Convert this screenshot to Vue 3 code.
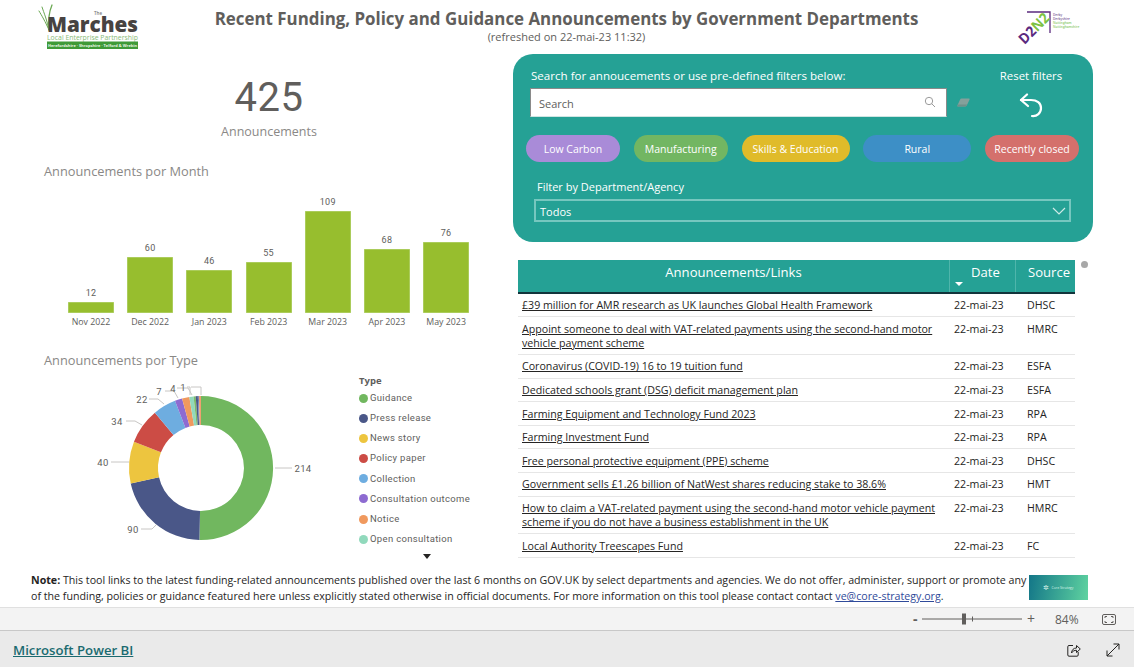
<script setup>
const bars = [
  { m: 'Nov 2022', v: 12 }, { m: 'Dec 2022', v: 60 }, { m: 'Jan 2023', v: 46 }, { m: 'Feb 2023', v: 55 },
  { m: 'Mar 2023', v: 109 }, { m: 'Apr 2023', v: 68 }, { m: 'May 2023', v: 76 },
]
const cx = 141, cy = 93, R = 72, r = 43
const sliceData = [
  [214, '#71B75F'], [90, '#4A5788'], [40, '#EDC53F'], [34, '#CC4C45'], [22, '#6EADE0'], [7, '#8D6BD1'],
  [7, '#F0995E'], [4, '#91D9BC'], [2, '#7EBB6B'], [2, '#4A5788'], [1, '#6B7FB5'], [2, '#F0A070'],
]
const total = sliceData.reduce((s, d) => s + d[0], 0)
let acc = 0
const slices = sliceData.map(([v, c]) => {
  const a0 = (acc / total) * 2 * Math.PI
  acc += v
  const a1 = (acc / total) * 2 * Math.PI
  const p = (rad, a) => `${(cx + rad * Math.sin(a)).toFixed(2)} ${(cy - rad * Math.cos(a)).toFixed(2)}`
  const large = a1 - a0 > Math.PI ? 1 : 0
  return { c, d: `M${p(R, a0)} A${R} ${R} 0 ${large} 1 ${p(R, a1)} L${p(r, a1)} A${r} ${r} 0 ${large} 0 ${p(r, a0)} Z` }
})
const ox = 60, oy = 375
const lab = [
  { t: '214', x: 303, y: 468, l: [[275, 468], [292, 468]] },
  { t: '90', x: 133, y: 529, l: [[141, 529], [152, 529], [156, 525]] },
  { t: '40', x: 103, y: 462, l: [[111, 462], [129, 462]] },
  { t: '34', x: 117, y: 421, l: [[126, 421], [135, 421], [142, 425]] },
  { t: '22', x: 142, y: 399, l: [[149, 399], [158, 399], [164, 404]] },
  { t: '7', x: 159, y: 391, l: [[165, 391], [174, 391], [178, 398]] },
  { t: '4', x: 173, y: 388, l: [[177, 388], [188, 388], [192, 395]] },
  { t: '1', x: 183, y: 387, l: [[187, 387], [190, 387], [190, 395]] },
  { t: '', x: 0, y: 0, l: [[191, 387], [201, 387], [201, 395]] },
].map(a => ({
  t: a.t, x: a.x - ox, y: a.y - oy,
  pts: a.l.map(q => `${q[0] - ox},${q[1] - oy}`).join(' '),
}))
const legend = [
  ['Guidance', '#71B75F'], ['Press release', '#4A5788'], ['News story', '#EDC53F'], ['Policy paper', '#CC4C45'],
  ['Collection', '#6EADE0'], ['Consultation outcome', '#8D6BD1'], ['Notice', '#F0995E'], ['Open consultation', '#91D9BC'],
]
const pills = [
  ['Low Carbon', 'p-low'], ['Manufacturing', 'p-man'], ['Skills & Education', 'p-ski'], ['Rural', 'p-rur'], ['Recently closed', 'p-rec'],
]
const rows = [
  ['£39 million for AMR research as UK launches Global Health Framework', 'DHSC'],
  ['Appoint someone to deal with VAT-related payments using the second-hand motor vehicle payment scheme', 'HMRC'],
  ['Coronavirus (COVID-19) 16 to 19 tuition fund', 'ESFA'],
  ['Dedicated schools grant (DSG) deficit management plan', 'ESFA'],
  ['Farming Equipment and Technology Fund 2023', 'RPA'],
  ['Farming Investment Fund', 'RPA'],
  ['Free personal protective equipment (PPE) scheme', 'DHSC'],
  ['Government sells £1.26 billion of NatWest shares reducing stake to 38.6%', 'HMT'],
  ['How to claim a VAT-related payment using the second-hand motor vehicle payment scheme if you do not have a business establishment in the UK', 'HMRC'],
  ['Local Authority Treescapes Fund', 'FC'],
]
</script>

<template>
  <div class="page">
    <div class="report">
      <header class="head">
        <svg class="marches" width="102" height="46" viewBox="0 0 102 46">
          <g fill="none" stroke="#6aa852" stroke-linecap="round">
            <path d="M11 26 C7 17 4 12 1 7" stroke-width="1" />
            <path d="M11 26 C9 16 6 9 4 3" stroke-width="1" />
            <path d="M11 26 C10 16 11 8 14 1" stroke-width="1.3" />
          </g>
          <text x="9" y="27.500" class="m-main" textLength="91" lengthAdjust="spacingAndGlyphs">Marches</text>
          <text x="56" y="11" class="m-the">The</text>
          <text x="9" y="35.500" class="m-sub" textLength="91" lengthAdjust="spacingAndGlyphs">Local Enterprise Partnership</text>
          <rect x="9" y="37.500" width="91" height="7.500" fill="#3f9a38" />
          <text x="10" y="43" class="m-band" textLength="89" lengthAdjust="spacingAndGlyphs">Herefordshire · Shropshire · Telford &amp; Wrekin</text>
        </svg>
        <div class="title-wrap">
          <h1 class="title">Recent Funding, Policy and Guidance Announcements by Government Departments</h1>
          <div class="refreshed">(refreshed on 22-mai-23 11:32)</div>
        </div>
        <svg class="d2n2" width="64" height="40" viewBox="0 0 64 40">
          <path d="M11 4 H34 V25" fill="none" stroke="#5b2a7e" stroke-width="1.300" />
          <text transform="translate(8.500 37) rotate(-45)" class="d-t" textLength="37" lengthAdjust="spacingAndGlyphs"><tspan fill="#5b2a7e">D2</tspan><tspan fill="#7cc142">N2</tspan></text>
          <g class="d-s">
            <text x="37" y="8" fill="#7a5a96">Derby</text>
            <text x="37" y="12" fill="#7a5a96">Derbyshire</text>
            <text x="37" y="16" fill="#8cc96a">Nottingham</text>
            <text x="37" y="20" fill="#8cc96a">Nottinghamshire</text>
          </g>
        </svg>
      </header>

      <div class="main">
        <section class="left">
          <div class="kpi">
            <div class="kpi-n">425</div>
            <div class="kpi-l">Announcements</div>
          </div>
          <h2 class="vis-title">Announcements por Month</h2>
          <div class="bars">
            <div v-for="b in bars" :key="b.m" class="bar-col">
              <div class="bar-v">{{ b.v }}</div>
              <div class="bar" :style="{ height: (b.v * 0.936).toFixed(1) + 'px' }"></div>
              <div class="bar-m">{{ b.m }}</div>
            </div>
          </div>
          <h2 class="vis-title second">Announcements por Type</h2>
          <div class="donut-row">
            <svg class="donut" width="290" height="180" viewBox="0 0 290 180">
              <path v-for="(s, i) in slices" :key="i" :d="s.d" :fill="s.c" />
              <g v-for="(a, i) in lab" :key="'l' + i">
                <polyline :points="a.pts" fill="none" stroke="#c8c6c4" stroke-width="1" />
                <text v-if="a.t" :x="a.x" :y="a.y + 3.500" text-anchor="middle" class="d-lab">{{ a.t }}</text>
              </g>
            </svg>
            <div class="legend">
              <div class="leg-title">Type</div>
              <div v-for="l in legend" :key="l[0]" class="leg-item">
                <span class="dot" :style="{ background: l[1] }"></span>{{ l[0] }}
              </div>
              <div class="leg-more"></div>
            </div>
          </div>
        </section>

        <section class="right">
          <div class="panel">
            <div class="panel-top">
              <div class="search-block">
                <div class="search-label">Search for annoucements or use pre-defined filters below:</div>
                <div class="search-row">
                  <div class="search-box">
                    <span class="search-ph">Search</span>
                    <svg width="12" height="12" viewBox="0 0 12 12" fill="none" stroke="#9b9b9b" stroke-width="1">
                      <circle cx="5" cy="5" r="3.700" />
                      <path d="M7.700 7.700 L11 11" />
                    </svg>
                  </div>
                  <svg class="eraser" width="13" height="9" viewBox="0 0 13 9">
                    <path d="M4.500 0.500 H12 Q13 0.500 12.500 1.700 L10 7 Q9.300 8.500 8 8.500 H1 Q0 8.500 0.500 7.300 L3 1.700 Q3.500 0.500 4.500 0.500 Z" fill="#85a09b" />
                    <path d="M0.800 6.500 H10.200 L9.600 7.700 Q9 8.500 8 8.500 H1 Q0 8.500 0.500 7.300 Z" fill="#6f8f8a" />
                  </svg>
                </div>
              </div>
              <div class="reset">
                <div class="reset-label">Reset filters</div>
                <svg width="24" height="26" viewBox="0 0 24 26" fill="none" stroke="#fff" stroke-width="2.200" stroke-linecap="round" stroke-linejoin="round">
                  <path d="M8 1.500 L2 7 L9 13" />
                  <path d="M2 7 H12 C18 7 22 10 22 15 C22 20 18 23.500 13 23" />
                </svg>
              </div>
            </div>
            <div class="pills">
              <div v-for="p in pills" :key="p[0]" class="pill" :class="p[1]">{{ p[0] }}</div>
            </div>
            <div class="filter-label">Filter by Department/Agency</div>
            <div class="select">
              <span class="select-v">Todos</span>
              <svg width="14" height="8" viewBox="0 0 14 8" fill="none" stroke="#cfeae7" stroke-width="1.200">
                <path d="M1 1 L7 7 L13 1" />
              </svg>
            </div>
          </div>

          <div class="table-wrap">
            <div class="table">
              <div class="tr th">
                <div class="c1 thc">Announcements/Links</div>
                <div class="c2 thd"><span class="sort"></span>Date</div>
                <div class="c3">Source</div>
              </div>
              <div v-for="r in rows" :key="r[0]" class="tr td">
                <div class="c1"><a class="lnk">{{ r[0] }}</a></div>
                <div class="c2">22-mai-23</div>
                <div class="c3">{{ r[1] }}</div>
              </div>
            </div>
            <div class="scroll-dot"></div>
          </div>
        </section>
      </div>

      <div class="note">
        <p class="note-text"><b>Note:</b> This tool links to the latest funding-related announcements published over the last 6 months on GOV.UK by select departments and agencies. We do not offer, administer, support or promote any<br />of the funding, policies or guidance featured here unless explicitly stated otherwise in official documents. For more information on this tool please contact contact <a class="mail">ve@core-strategy.org</a>.</p>
        <div class="core"><span class="core-mark">✲</span><span>Core Strategy</span></div>
      </div>
    </div>

    <div class="zoombar">
      <span class="minus">-</span>
      <svg width="100" height="14" viewBox="0 0 100 14">
        <path d="M0 7 H100" stroke="#605e5c" stroke-width="1" />
        <path d="M50.500 4.500 V9.500" stroke="#605e5c" stroke-width="1" />
        <rect x="40" y="1.500" width="4" height="11" fill="#605e5c" />
      </svg>
      <span class="plus">+</span>
      <span class="pct">84%</span>
      <svg class="fit" width="14" height="11" viewBox="0 0 14 11" fill="none" stroke="#605e5c" stroke-width="1">
        <rect x="0.500" y="0.500" width="13" height="10" rx="1.500" />
        <path d="M3 4 V2.500 H5 M9 2.500 H11 V4 M11 7 V8.500 H9 M5 8.500 H3 V7" />
      </svg>
    </div>

    <footer class="foot">
      <a class="pbi">Microsoft Power BI</a>
      <div class="foot-icons">
        <svg width="14" height="14" viewBox="0 0 14 14" fill="none" stroke="#252423" stroke-width="1">
          <path d="M6 2.500 H2 Q0.800 2.500 0.800 3.700 V12 Q0.800 13.200 2 13.200 H10 Q11.200 13.200 11.200 12 V9" />
          <path d="M4.500 10 C4.700 7 6.500 5 9.500 5 V2.500 L13.300 6 L9.500 9.500 V7.300 C7.500 7.200 5.800 8 4.500 10 Z" />
        </svg>
        <svg width="14" height="14" viewBox="0 0 14 14" fill="none" stroke="#252423" stroke-width="1">
          <path d="M1 13 L13 1 M7.500 1 H13 V6.500 M1 7.500 V13 H6.500" />
        </svg>
      </div>
    </footer>
  </div>
</template>

<style>
html, body { margin: 0; background: #fff; }
</style>

<style scoped>
.page { width: 1134px; height: 667px; display: flex; flex-direction: column; overflow: hidden; font-family: "Open Sans", "Noto Sans", sans-serif; color: #252423; background: #fff; }
.report { height: 607px; display: flex; flex-direction: column; }

.head { height: 54px; display: flex; align-items: flex-start; padding-left: 38px; box-sizing: border-box; }
.marches { margin-top: 4px; flex: none; overflow: visible; }
.m-main { font: 800 21px "Open Sans", sans-serif; fill: #474341; }
.m-the { font: 600 4.500px "Open Sans", sans-serif; fill: #777; }
.m-sub { font: 400 6.500px "Open Sans", sans-serif; fill: #8abb78; }
.m-band { font: 700 4px "Open Sans", sans-serif; fill: #eaf5e6; }
.title-wrap { width: 899px; margin-left: -23px; flex: none; text-align: center; padding-top: 7px; }
.title { margin: 0; font-size: 16.900px; font-weight: 700; line-height: 23px; color: #605e5c; white-space: nowrap; }
.refreshed { font-size: 11px; line-height: 14px; color: #605e5c; }
.d2n2 { margin-top: 8px; flex: none; overflow: visible; }
.d-t { font: 700 14.500px "Open Sans", sans-serif; }
.d-s { font: 600 3.200px "Open Sans", sans-serif; }

.main { height: 518px; display: flex; }
.left { width: 513px; flex: none; display: flex; flex-direction: column; }
.kpi { padding-left: 25px; text-align: center; padding-top: 19px; height: 108px; box-sizing: border-box; }
.kpi-n { font: 400 40px/50px Roboto, sans-serif; letter-spacing: .6px; color: #605e5c; }
.kpi-l { font-size: 12.500px; line-height: 18px; color: #8a8886; }
.vis-title { margin: 0; padding-left: 44px; font-size: 12.800px; font-weight: 400; line-height: 18px; color: #8a8886; white-space: nowrap; }
.vis-title.second { margin-top: 18px; }
.bars { height: 153px; display: flex; align-items: flex-end; gap: 13.200px; padding-left: 68px; box-sizing: border-box; padding-bottom: 4px; }
.bar-col { width: 46px; display: flex; flex-direction: column; align-items: center; }
.bar-v { font: 400 9px/12px Roboto, sans-serif; letter-spacing: .3px; color: #605e5c; margin-bottom: 3px; }
.bar { width: 46px; background: #97BE2E; box-shadow: inset 0 0 0 .5px #c0d987; }
.bar-m { font-size: 8.800px; line-height: 14px; margin-top: 2px; width: 60px; text-align: center; color: #605e5c; white-space: nowrap; }

.donut-row { display: flex; margin-top: 6px; padding-left: 60px; }
.donut { flex: none; }
.d-lab { font: 400 9.500px Roboto, sans-serif; letter-spacing: .3px; fill: #605e5c; }
.legend { margin: -1px 0 0 9px; flex: none; }
.leg-title { font-size: 9.500px; font-weight: 700; line-height: 14px; color: #605e5c; }
.leg-item { display: flex; align-items: center; font: 400 9.500px/20.150px Roboto, sans-serif; letter-spacing: .33px; color: #605e5c; white-space: nowrap; }
.leg-item:first-of-type { margin-top: -2px; }
.dot { width: 9px; height: 9px; border-radius: 50%; margin-right: 2px; flex: none; }
.leg-more { width: 0; height: 0; border-left: 4.500px solid transparent; border-right: 4.500px solid transparent; border-top: 5px solid #252423; margin: 5px 0 0 64px; }

.right { width: 580px; flex: none; }
.panel { height: 188px; background: #25A195; border-radius: 20px; box-sizing: border-box; padding-top: 15px; color: #fff; font-size: 11px; }
.panel-top { display: flex; }
.search-block { margin-left: 18px; width: 447px; flex: none; }
.search-label { font-size: 11.600px; line-height: 14px; white-space: nowrap; }
.search-row { display: flex; align-items: center; margin: 5px 0 0 -1px; }
.search-box { width: 417px; height: 28.500px; box-sizing: border-box; background: #fff; border: 1px solid #8a8a8a; border-bottom-color: #cfe5e2; display: flex; align-items: center; justify-content: space-between; padding: 0 10px 0 8px; color: #605e5c; flex: none; }
.search-ph { padding-top: 3px; }
.eraser { margin-left: 10px; flex: none; }
.reset { margin-left: 6px; width: 94px; display: flex; flex-direction: column; align-items: center; }
.reset-label { font-size: 11.400px; line-height: 14px; white-space: nowrap; }
.reset svg { margin-top: 10px; }
.pills { display: flex; justify-content: space-between; padding: 0 14px 0 13px; margin-top: 16px; font-size: 10.500px; }
.pill { height: 27px; width: 94px; border-radius: 14px; display: flex; align-items: center; justify-content: center; white-space: nowrap; }
.p-low { background: #A98BD8; }
.p-man { background: #72B662; }
.p-ski { background: #E0BB2A; width: 108px; }
.p-rur { background: #3D8FC6; width: 108px; }
.p-rec { background: #D4706C; }
.filter-label { margin: 18px 0 0 24px; line-height: 14px; }
.select { margin: 5px 22px 0 21px; height: 23px; box-sizing: border-box; border: 2px solid #76c7bf; display: flex; align-items: center; justify-content: space-between; padding: 0 3px 0 4px; }
.select-v { padding-top: 1px; }

.table-wrap { display: flex; margin: 18px 0 0 5px; }
.table { width: 557px; flex: none; font-size: 10.650px; }
.tr { display: grid; grid-template-columns: 431px 66px 60px; }
.th { height: 33.800px; box-sizing: border-box; background: #25A195; border-bottom: 2px solid #12343b; color: #fff; font-size: 13.100px; line-height: 25px; }
.thd { position: relative; padding-left: 21px; border-left: 1px solid #4fb5ab; box-sizing: border-box; }
.thc { text-align: center; }
.th .c3 { padding-left: 12px; border-left: 1px solid #4fb5ab; white-space: nowrap; }
.sort { position: absolute; left: 5px; top: 22px; width: 0; height: 0; border-left: 4px solid transparent; border-right: 4px solid transparent; border-top: 4px solid #fff; }
.td { border-bottom: 1px solid #e6e6e6; line-height: 14.100px; padding: 4.250px 0; color: #252423; }
.td .c1 { padding: 0 8px 0 4px; }
.td .c2 { padding-left: 5px; }
.td .c3 { padding-left: 12px; }
.lnk { text-decoration: underline; color: #252423; }
.scroll-dot { width: 7px; height: 7px; border-radius: 50%; background: #a8a8a8; margin: 1px 0 0 6px; flex: none; }

.note { height: 35px; display: flex; align-items: flex-start; padding-left: 31px; }
.note-text { margin: 0; width: 998px; flex: none; font-size: 10.650px; line-height: 16px; white-space: nowrap; color: #252423; }
.mail { color: #2f4a9a; text-decoration: underline; }
.core { width: 59px; height: 25px; margin-top: 3px; flex: none; background: linear-gradient(100deg, #137688, #5fd3a0); color: #d8f3ea; font-size: 3.500px; display: flex; align-items: center; justify-content: center; gap: 2px; white-space: nowrap; }
.core-mark { font-size: 7px; }

.zoombar { height: 24px; box-sizing: border-box; background: #f3f3f3; border-top: 1px solid #e0e0e0; border-bottom: 1px solid #c8c8c8; display: flex; align-items: center; padding-left: 913px; color: #605e5c; }
.minus { width: 9px; font-size: 14px; font-weight: 700; line-height: 14px; }
.plus { width: 14px; margin-left: 5px; font-size: 14px; line-height: 14px; }
.pct { font-size: 12px; margin-left: 14px; width: 28px; }
.fit { margin-left: 19px; }

.foot { flex: 1; background: #eaeaea; display: flex; align-items: center; justify-content: space-between; padding: 2px 14px 0 13px; }
.pbi { font-size: 13.200px; font-weight: 600; color: #1a6a70; text-decoration: underline; }
.foot-icons { display: flex; gap: 25px; }
</style>
